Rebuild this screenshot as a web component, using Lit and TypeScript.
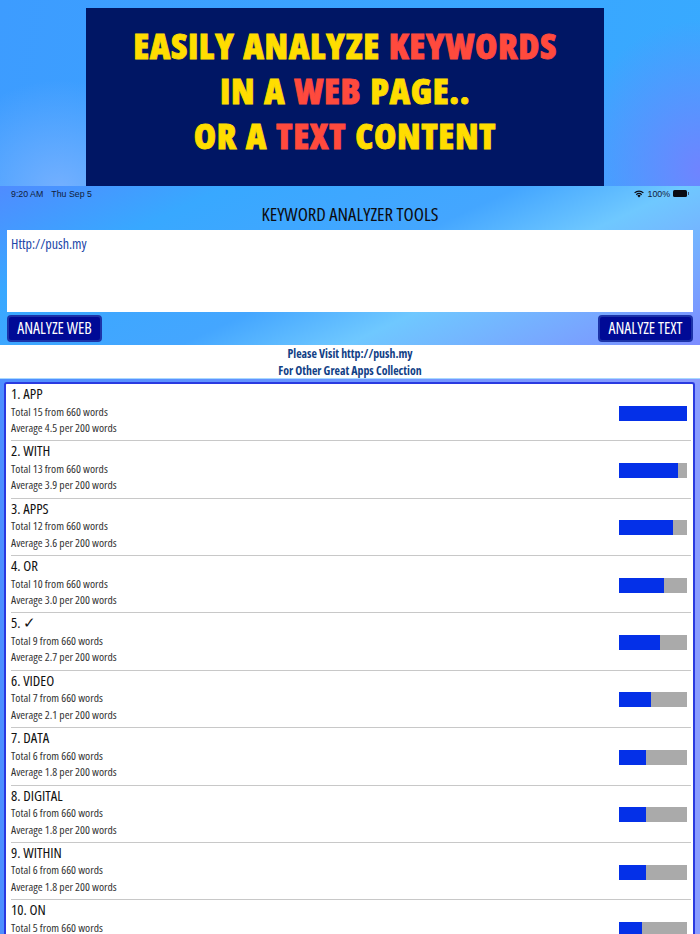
import { LitElement, html, css } from "lit";
import { customElement } from "lit/decorators.js";

const rows = [
  ["1. APP", 15, "4.5"],
  ["2. WITH", 13, "3.9"],
  ["3. APPS", 12, "3.6"],
  ["4. OR", 10, "3.0"],
  ["5. ✓", 9, "2.7"],
  ["6. VIDEO", 7, "2.1"],
  ["7. DATA", 6, "1.8"],
  ["8. DIGITAL", 6, "1.8"],
  ["9. WITHIN", 6, "1.8"],
  ["10. ON", 5, "1.5"],
] as const;

@customElement("app-root")
export class AppRoot extends LitElement {
  static styles = css`
    :host {
      display: block;
      width: 700px;
      height: 934px;
      overflow: hidden;
      font-family: "Open Sans", "Liberation Sans", sans-serif;
      font-stretch: 75%;
      color: #111;
      background: #fff;
    }
    .hero {
      height: 186px;
      box-sizing: border-box;
      padding: 8px 0 0 86px;
      background:
        radial-gradient(ellipse 120px 110px at 60px 190px, #74b0ff 0%, rgba(116, 176, 255, 0) 100%),
        radial-gradient(ellipse 130px 150px at 700px 170px, #6f84ff 0%, rgba(111, 132, 255, 0) 100%),
        linear-gradient(100deg, #3d9cff 0%, #38aaff 100%);
    }
    .poster {
      width: 518px;
      height: 178px;
      background: #001664;
      color: #ffdd00;
      font-weight: 800;
      font-size: 36px;
      line-height: 45px;
      letter-spacing: 0.6px;
      word-spacing: 2px;
      text-align: center;
      padding-top: 15px;
      box-sizing: border-box;
      -webkit-text-stroke: 0.8px currentColor;
      white-space: nowrap;
    }
    .poster b { color: #ff4a3d; font-weight: 800; }
    .app {
      height: 159px;
      box-sizing: border-box;
      display: flex;
      flex-direction: column;
      background: linear-gradient(155deg, #4f8cff 0%, #38a8ff 22%, #44a6ff 50%, #6fc8ff 66%, #78a6ff 85%, #7c8cff 100%);
    }
    .status {
      height: 15px;
      display: flex;
      align-items: center;
      padding: 0 11px;
      font-family: "Liberation Sans", sans-serif;
      font-stretch: 100%;
      font-size: 8.8px;
      color: #10203a;
      flex: none;
    }
    .status .date { margin-left: 8px; }
    .status .right { margin-left: auto; display: flex; align-items: center; gap: 3px; }
    .battery { width: 14px; height: 7px; background: #0b0b14; border-radius: 1.5px; }
    .nub { width: 1px; height: 3px; background: #3a4a70; margin-left: -2px; }
    .title {
      height: 29px;
      line-height: 25px;
      text-align: center;
      font-size: 18.7px;
      color: #0c0c10;
      flex: none;
    }
    .input {
      margin: 0 7px;
      height: 82px;
      background: #fff;
      color: #2146a8;
      font-size: 14px;
      line-height: 27px;
      padding-left: 4px;
      flex: none;
    }
    .actions {
      display: flex;
      justify-content: space-between;
      padding: 3px 7px 0;
    }
    .btn {
      box-sizing: border-box;
      height: 27px;
      width: 95px;
      background: #000a96;
      border: 2px solid #1c33a8;
      border-radius: 4px;
      color: #fff;
      font-size: 15.8px;
      line-height: 23px;
      text-align: center;
      white-space: nowrap;
    }
    .visit {
      height: 33px;
      background: #fff;
      color: #123f86;
      font-weight: 700;
      font-size: 11.85px;
      line-height: 16.5px;
      text-align: center;
    }
    .list-wrap {
      height: 556px;
      box-sizing: border-box;
      padding: 4px 5px 0 4px;
      background: linear-gradient(90deg, #4d8fff, #8a9cff);
      box-shadow: inset 0 1px 0 #a8d8ff;
    }
    .list {
      box-sizing: border-box;
      height: 100%;
      background: #fff;
      border: 2px solid #2a3ae0;
      border-bottom: 0;
      border-radius: 3px 3px 0 0;
      padding: 0 2px 0 5px;
      overflow: hidden;
    }
    .row {
      box-sizing: border-box;
      height: 57.37px;
      border-bottom: 1px solid #c8c8c8;
      display: flex;
      align-items: center;
      justify-content: space-between;
    }
    .text { align-self: flex-start; margin-top: -1px; }
    .word { font-size: 14.7px; line-height: 20px; color: #111; }
    .sub { font-size: 11.6px; line-height: 16.5px; color: #333; }
    .sub.first { margin-top: 0.5px; }
    .bar {
      width: 68px;
      height: 15px;
      background: #aaa;
      margin: 2px 4px 0 0;
      flex: none;
    }
    .fill { height: 100%; background: #0430e8; }
  `;

  render() {
    return html`
      <div class="hero">
        <div class="poster">
          EASILY ANALYZE <b>KEYWORDS</b><br />
          IN A <b>WEB</b> PAGE..<br />
          OR A <b>TEXT</b> CONTENT
        </div>
      </div>
      <div class="app">
        <div class="status">
          <span>9:20 AM</span><span class="date">Thu Sep 5</span>
          <span class="right">
            <svg width="12" height="9" viewBox="0 0 12 9">
              <path d="M6 8.6 4.3 6.7a2.4 2.4 0 0 1 3.4 0Z" fill="#0b0b14" />
              <path d="M3.3 5.7a3.9 3.9 0 0 1 5.4 0" fill="none" stroke="#0b0b14" stroke-width="1.2" />
              <path d="M1.6 3.9a6.3 6.3 0 0 1 8.8 0" fill="none" stroke="#0b0b14" stroke-width="1.2" />
            </svg>
            <span>100%</span>
            <span class="battery"></span>
            <span class="nub"></span>
          </span>
        </div>
        <div class="title">KEYWORD ANALYZER TOOLS</div>
        <div class="input">Http://push.my</div>
        <div class="actions">
          <div class="btn">ANALYZE WEB</div>
          <div class="btn">ANALYZE TEXT</div>
        </div>
      </div>
      <div class="visit">Please Visit http://push.my<br />For Other Great Apps Collection</div>
      <div class="list-wrap">
        <div class="list">
          ${rows.map(
            ([w, n, avg]) => html`
              <div class="row">
                <div class="text">
                  <div class="word">${w}</div>
                  <div class="sub first">Total ${n} from 660 words</div>
                  <div class="sub">Average ${avg} per 200 words</div>
                </div>
                <div class="bar"><div class="fill" style="width:${(n / 15) * 100}%"></div></div>
              </div>
            `
          )}
        </div>
      </div>
    `;
  }
}
